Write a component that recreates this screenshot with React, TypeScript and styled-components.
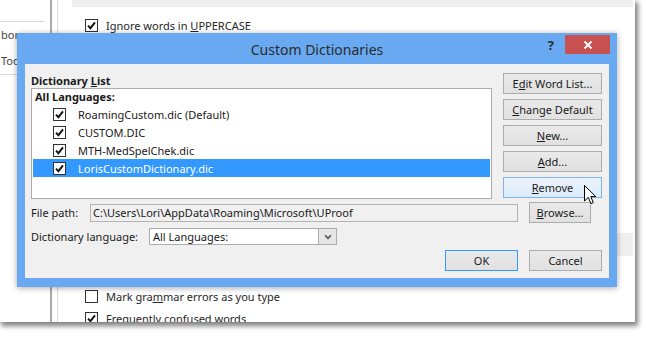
import React from 'react';
import styled, { createGlobalStyle } from 'styled-components';

const GlobalStyle = createGlobalStyle`
  * { box-sizing: border-box; }
  body {
    margin: 0;
    background: #ffffff;
    font-family: "Noto Sans", "Open Sans", sans-serif;
    font-size: 11px;
    color: #1a1a1a;
  }
`;

const CheckMark = () => (
  <svg width="11" height="11" viewBox="0 0 11 11">
    <path d="M2 5.6 L4.4 8.2 L9 2.4" fill="none" stroke="#111" strokeWidth="1.9" />
  </svg>
);

const CheckBox = ({ checked }: { checked: boolean }) => (
  <Box>{checked && <CheckMark />}</Box>
);

const Cursor = () => (
  <CursorWrap>
    <svg width="13" height="20" viewBox="0 0 13 20">
      <path
        d="M0.5 0.5 L0.5 16 L4.3 12.4 L6.9 18.6 L9.3 17.6 L6.8 11.6 L11.8 11.6 Z"
        fill="#fff"
        stroke="#000"
        strokeWidth="1"
        strokeLinejoin="round"
      />
    </svg>
  </CursorWrap>
);

const dictionaries = [
  { name: 'RoamingCustom.dic (Default)', selected: false },
  { name: 'CUSTOM.DIC', selected: false },
  { name: 'MTH-MedSpelChek.dic', selected: false },
  { name: 'LorisCustomDictionary.dic', selected: true },
];

export default function App() {
  return (
    <Screen>
      <GlobalStyle />
      <BackWindow>
        <Sidebar>
          <NavSep $width={45} />
          <NavItem>bon</NavItem>
          <NavItem>Toolbar</NavItem>
          <NavSep $width={50} />
        </Sidebar>
        <MainPane>
          <TopBand />
          <OptionRow $top={12}>
            <CheckBox checked />
            <span>
              Ignore words in <u>U</u>PPERCASE
            </span>
          </OptionRow>
          <SectionBand />
          <OptionRow $top={34}>
            <CheckBox checked={false} />
            <span>
              Mark gra<u>m</u>mar errors as you type
            </span>
          </OptionRow>
          <OptionRow $top={9}>
            <CheckBox checked />
            <span>Frequently confused words</span>
          </OptionRow>
        </MainPane>
      </BackWindow>

      <Dialog>
        <TitleBar>
          <Title>Custom Dictionaries</Title>
          <TitleControls>
            <Help>?</Help>
            <CloseButton>
              <svg width="10" height="10" viewBox="0 0 10 10">
                <path d="M1.5 1.5 L8.5 8.5 M8.5 1.5 L1.5 8.5" stroke="#fff" strokeWidth="1.8" />
              </svg>
            </CloseButton>
          </TitleControls>
        </TitleBar>

        <Client>
          <TopArea>
            <div>
              <GroupLabel>
                Dictionary <u>L</u>ist
              </GroupLabel>
              <ListBox>
                <ListHeader>All Languages:</ListHeader>
                {dictionaries.map((d) => (
                  <ListItem key={d.name} $selected={d.selected}>
                    <CheckBox checked />
                    <span>{d.name}</span>
                  </ListItem>
                ))}
              </ListBox>
            </div>
            <ButtonColumn>
              <Button>
                E<u>d</u>it Word List...
              </Button>
              <Button>
                <u>C</u>hange Default
              </Button>
              <Button>
                <u>N</u>ew...
              </Button>
              <Button>
                <u>A</u>dd...
              </Button>
              <Button $hover>
                <u>R</u>emove
              </Button>
            </ButtonColumn>
          </TopArea>

          <FileRow>
            <FieldLabel>File path:</FieldLabel>
            <PathField>C:\Users\Lori\AppData\Roaming\Microsoft\UProof</PathField>
            <Button>
              <u>B</u>rowse...
            </Button>
          </FileRow>

          <LangRow>
            <FieldLabel>
              Dictionary lan<u>g</u>uage:
            </FieldLabel>
            <Select>
              <SelectValue>All Languages:</SelectValue>
              <SelectArrow>
                <svg width="8" height="6" viewBox="0 0 8 6">
                  <path d="M1 1.2 L4 4.4 L7 1.2" fill="none" stroke="#555" strokeWidth="1.6" />
                </svg>
              </SelectArrow>
            </Select>
          </LangRow>

          <ButtonRow>
            <Button $default>OK</Button>
            <Button>Cancel</Button>
          </ButtonRow>
        </Client>
      </Dialog>

      <Cursor />
    </Screen>
  );
}

const Screen = styled.div`
  position: relative;
  width: 650px;
  height: 337px;
  overflow: hidden;
  background: #ffffff;
`;

const BackWindow = styled.div`
  display: flex;
  width: 635px;
  height: 322px;
  background: #ffffff;
  box-shadow: 2px 3px 5px 1px rgba(0, 0, 0, 0.5);
  overflow: hidden;
`;

const Sidebar = styled.div`
  display: flex;
  flex-direction: column;
  width: 52px;
  flex-shrink: 0;
  padding-top: 21px;
  border-right: 2px solid #a9a9a9;
  color: #444;
  white-space: nowrap;
  overflow: hidden;
`;

const NavSep = styled.div<{ $width: number }>`
  width: ${({ $width }) => $width}px;
  height: 1px;
  background: #d6d6d6;
  flex-shrink: 0;
`;

const NavItem = styled.div`
  height: 26px;
  line-height: 26px;
  padding-left: 1px;
`;

const MainPane = styled.div`
  display: flex;
  flex-direction: column;
  flex: 1;
  margin-left: 5px;
  padding-left: 14px;
  padding-right: 2px;
  border-left: 1px solid #d9d9d9;
`;

const TopBand = styled.div`
  height: 7px;
  background: #efefef;
  flex-shrink: 0;
`;

const SectionBand = styled.div`
  height: 23px;
  margin-top: 201px;
  background: #efefef;
  flex-shrink: 0;
`;

const OptionRow = styled.div<{ $top: number }>`
  display: flex;
  align-items: center;
  gap: 8px;
  height: 13px;
  margin-top: ${({ $top }) => $top}px;
  padding-left: 13px;
  color: #262626;
  flex-shrink: 0;
  white-space: nowrap;
`;

const Box = styled.span`
  display: inline-flex;
  align-items: center;
  justify-content: center;
  width: 13px;
  height: 13px;
  flex-shrink: 0;
  border: 1px solid #333;
  background: #fff;
`;

const Dialog = styled.div`
  position: absolute;
  left: 17px;
  top: 33px;
  width: 600px;
  height: 254px;
  display: flex;
  flex-direction: column;
  padding: 0 8px 9px;
  background: #69a9f1;
  box-shadow: 0 1px 6px rgba(0, 0, 0, 0.35);
`;

const TitleBar = styled.div`
  display: grid;
  grid-template-columns: 1fr auto 1fr;
  height: 31px;
  flex-shrink: 0;
`;

const Title = styled.div`
  grid-column: 2;
  padding-top: 8px;
  font-size: 14px;
  line-height: 17px;
  color: #2b2b2b;
`;

const TitleControls = styled.div`
  grid-column: 3;
  justify-self: end;
  display: flex;
  align-items: center;
  height: 19px;
  margin-top: 2px;
  margin-right: -1px;
`;

const Help = styled.span`
  margin-right: 11px;
  font-size: 13px;
  font-weight: 700;
  color: #2b2b2b;
`;

const CloseButton = styled.div`
  display: flex;
  align-items: center;
  justify-content: center;
  width: 45px;
  height: 19px;
  background: #c75050;
`;

const Client = styled.div`
  display: flex;
  flex-direction: column;
  flex: 1;
  padding: 9px 7px 0 6px;
  background: #f0f0f0;
`;

const TopArea = styled.div`
  display: grid;
  grid-template-columns: 461px 99px;
  column-gap: 11px;
`;

const GroupLabel = styled.div`
  height: 15px;
  line-height: 15px;
  font-weight: 700;
`;

const ListBox = styled.div`
  height: 111px;
  border: 1px solid #acacac;
  background: #fff;
`;

const ListHeader = styled.div`
  height: 16px;
  line-height: 16px;
  padding-left: 3px;
  font-weight: 700;
`;

const ListItem = styled.div<{ $selected: boolean }>`
  display: flex;
  align-items: center;
  gap: 12px;
  height: 18px;
  margin: 0 1px;
  padding-left: 20px;
  background: ${({ $selected }) => ($selected ? '#3399ff' : 'transparent')};
  color: ${({ $selected }) => ($selected ? '#ffffff' : '#1a1a1a')};
  white-space: nowrap;
`;

const ButtonColumn = styled.div`
  display: flex;
  flex-direction: column;
  gap: 5px;
`;

const Button = styled.div<{ $hover?: boolean; $default?: boolean }>`
  display: flex;
  align-items: center;
  justify-content: center;
  height: 21px;
  border: 1px solid
    ${({ $hover, $default }) => ($hover ? '#7eb4ea' : $default ? '#3399ff' : '#adadad')};
  background: ${({ $hover }) =>
    $hover ? 'linear-gradient(#ecf4fc, #dcecfc)' : 'linear-gradient(#e9e9e9, #e1e1e1)'};
  color: #1a1a1a;
  white-space: nowrap;
`;

const FileRow = styled.div`
  display: grid;
  grid-template-columns: 59px 428px 73px;
  column-gap: 0;
  align-items: center;
  margin-top: 3px;

  & > :last-child {
    margin-left: 11px;
  }
`;

const FieldLabel = styled.div`
  line-height: 15px;
  white-space: nowrap;
`;

const PathField = styled.div`
  height: 18px;
  line-height: 16px;
  padding-left: 2px;
  border: 1px solid #b4b4b4;
  background: #f0f0f0;
  white-space: nowrap;
  overflow: hidden;
`;

const LangRow = styled.div`
  display: grid;
  grid-template-columns: 118px 188px;
  align-items: center;
  margin-top: 5px;
`;

const Select = styled.div`
  display: flex;
  height: 17px;
  border: 1px solid #acacac;
  background: #fff;
`;

const SelectValue = styled.div`
  flex: 1;
  padding-left: 3px;
  line-height: 15px;
`;

const SelectArrow = styled.div`
  display: flex;
  align-items: center;
  justify-content: center;
  width: 19px;
  margin: -1px -1px -1px 0;
  border: 1px solid #acacac;
  background: #e6e6e6;
`;

const ButtonRow = styled.div`
  display: flex;
  justify-content: flex-end;
  gap: 11px;
  margin-top: 5px;

  & > * {
    width: 73px;
  }
`;

const CursorWrap = styled.div`
  position: absolute;
  left: 584px;
  top: 185px;
  width: 13px;
  height: 20px;
  pointer-events: none;
`;
